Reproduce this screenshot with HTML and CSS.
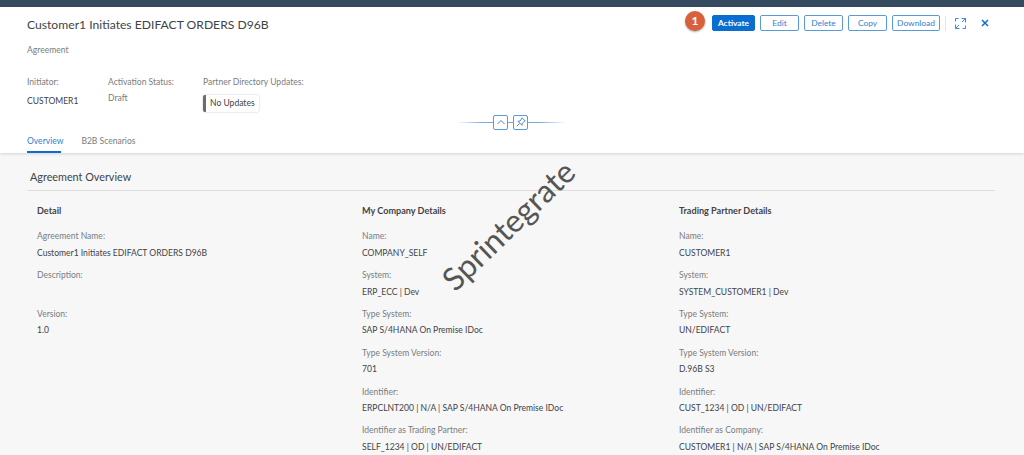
FILE: index.html
```html
<!DOCTYPE html>
<html lang="en">
<head>
<meta charset="utf-8">
<title>Agreement</title>
<link rel="stylesheet" href="styles.css">
</head>
<body>
<div class="shell"></div>
<header class="head">
  <div class="title-row">
    <h1 class="title">Customer1 Initiates EDIFACT ORDERS D96B</h1>
    <div class="actions">
      <span class="step">1</span>
      <button class="btn primary">Activate</button>
      <button class="btn w-edit">Edit</button>
      <button class="btn w-del">Delete</button>
      <button class="btn w-copy">Copy</button>
      <button class="btn w-dl">Download</button>
      <span class="sep"></span>
      <svg class="ico-expand" width="11" height="11" viewBox="0 0 11 11" fill="none" stroke="#3d8bd9" stroke-width="1"><path d="M6.500 .5h4v4M10.500 .5 7 4M4.500 10.500h-4v-4M.5 10.500 4 7M.5 3.500v-3h3M7.500 10.500h3v-3"/></svg>
      <svg class="ico-close" width="8" height="8" viewBox="0 0 8 8" fill="none" stroke="#0a6ed1" stroke-width="1.5"><path d="M1 1l6 6M7 1 1 7"/></svg>
    </div>
  </div>
  <div class="subtitle">Agreement</div>
  <div class="attrs">
    <div class="attr a1"><div class="lab">Initiator:</div><div class="val">CUSTOMER1</div></div>
    <div class="attr a2"><div class="lab">Activation Status:</div><div class="val draft">Draft</div></div>
    <div class="attr a3"><div class="lab">Partner Directory Updates:</div><div class="tag">No Updates</div></div>
  </div>
  <div class="toggles">
    <span class="line left"></span>
    <span class="tbtn"><svg width="10" height="10" viewBox="0 0 10 10" fill="none" stroke="#3d8bd9" stroke-width="1"><path d="M1.500 7l3.500-3.500L8.500 7"/></svg></span>
    <span class="gap"></span>
    <span class="tbtn"><svg width="10" height="10" viewBox="0 0 10 10" fill="none" stroke="#3d8bd9" stroke-width="1"><path d="M6 .8l3.200 3.200-1 .4L6.300 6.300l-.3 2-4-4 2-.3L5.600 1.800zM3.500 6.500.8 9.200"/></svg></span>
    <span class="line right"></span>
  </div>
  <nav class="tabs">
    <span class="tab active">Overview</span>
    <span class="tab">B2B Scenarios</span>
  </nav>
</header>
<main class="content">
  <h2 class="section">Agreement Overview</h2>
  <div class="cols">
    <section class="col c1">
      <h3>Detail</h3>
      <div class="f"><div class="lab">Agreement Name:</div><div class="val">Customer1 Initiates EDIFACT ORDERS D96B</div></div>
      <div class="f"><div class="lab">Description:</div><div class="val">&nbsp;</div></div>
      <div class="f"><div class="lab">Version:</div><div class="val">1.0</div></div>
    </section>
    <section class="col c2">
      <h3>My Company Details</h3>
      <div class="f"><div class="lab">Name:</div><div class="val">COMPANY_SELF</div></div>
      <div class="f"><div class="lab">System:</div><div class="val">ERP_ECC | Dev</div></div>
      <div class="f"><div class="lab">Type System:</div><div class="val">SAP S/4HANA On Premise IDoc</div></div>
      <div class="f"><div class="lab">Type System Version:</div><div class="val">701</div></div>
      <div class="f"><div class="lab">Identifier:</div><div class="val">ERPCLNT200 | N/A | SAP S/4HANA On Premise IDoc</div></div>
      <div class="f"><div class="lab">Identifier as Trading Partner:</div><div class="val">SELF_1234 | OD | UN/EDIFACT</div></div>
    </section>
    <section class="col c3">
      <h3>Trading Partner Details</h3>
      <div class="f"><div class="lab">Name:</div><div class="val">CUSTOMER1</div></div>
      <div class="f"><div class="lab">System:</div><div class="val">SYSTEM_CUSTOMER1 | Dev</div></div>
      <div class="f"><div class="lab">Type System:</div><div class="val">UN/EDIFACT</div></div>
      <div class="f"><div class="lab">Type System Version:</div><div class="val">D.96B S3</div></div>
      <div class="f"><div class="lab">Identifier:</div><div class="val">CUST_1234 | OD | UN/EDIFACT</div></div>
      <div class="f"><div class="lab">Identifier as Company:</div><div class="val">CUSTOMER1 | N/A | SAP S/4HANA On Premise IDoc</div></div>
    </section>
  </div>
</main>
<div class="watermark">Sprintegrate</div>
</body>
</html>
```
FILE: styles.css
```css
* { box-sizing: border-box; }
html, body { margin: 0; height: 455px; overflow: hidden; }
body { font-family: Lato, "Liberation Sans", sans-serif; font-size: 8.55px; color: #414447; background: #f7f7f7; position: relative; }
.shell { height: 7px; background: #354a5f; }
.head { height: 146px; background: #fff; box-shadow: 0 1px 3px rgba(0,0,0,.15); position: relative; padding: 0 0 0 27px; display: flex; flex-direction: column; }
.title-row { display: flex; justify-content: space-between; align-items: flex-start; height: 31px; }
.title { margin: 9px 0 0; font-size: 12.15px; font-weight: 400; line-height: 18px; }
.actions { display: flex; align-items: center; margin-top: 8px; padding-right: 35px; height: 16px; }
.step { width: 20px; height: 20px; border-radius: 50%; background: #d8613c; color: #fff; font-size: 12px; font-weight: 700; display: flex; align-items: center; justify-content: center; box-shadow: 0 1px 2px rgba(0,0,0,.35); margin-right: 7px; margin-top: -5px; }
.btn { font: inherit; font-size: 8.400px; height: 16px; padding: 0; border: 1px solid #5a9ad8; border-radius: 2px; background: #fff; color: #2f7fce; margin-right: 5px; line-height: 14px; }
.primary { background: #0a6ed1; border-color: #0a6ed1; color: #fff; font-weight: 700; width: 43px; }
.w-edit { width: 39px; }
.w-del { width: 39px; }
.w-copy { width: 39px; }
.w-dl { width: 48px; }
.sep { width: 1px; height: 15px; background: #e4e4e4; margin-right: 9px; }
.ico-expand { margin-right: 15px; }
.subtitle { color: #7a7d80; margin-top: 6px; line-height: 12px; }
.attrs { display: flex; margin-top: 20px; }
.lab { color: #7a7d80; line-height: 12px; }
.val { line-height: 12px; }
.attr .val { margin-top: 4px; }
.attr .draft { margin-top: 4px; color: #7a7d80; }
.a1 { width: 81px; }
.a2 { width: 95px; }
.attr.a1 .val { margin-top: 7px; }
.tag { display: inline-block; margin-top: 7px; height: 17px; line-height: 17px; padding: 0 4px; background: #fff; border-left: 3px solid #6a6d70; border-radius: 2px; box-shadow: 0 0 2px rgba(0,0,0,.25); }
.toggles { position: absolute; left: 457px; top: 107px; display: flex; align-items: center; height: 16px; }
.line { width: 36px; height: 1px; }
.line.left { background: linear-gradient(90deg, rgba(10,110,209,0), #7aa8d8 70%); }
.line.right { width: 38px; background: linear-gradient(90deg, #7aa8d8 30%, rgba(10,110,209,0)); }
.gap { width: 5px; height: 1px; background: #7aa8d8; }
.tbtn { width: 15px; height: 15px; border: 1px solid #5a9ad8; border-radius: 2px; display: flex; align-items: center; justify-content: center; background: #fff; }
.tabs { position: absolute; left: 27px; top: 127px; height: 19px; display: flex; gap: 18px; }
.tab { color: #7a7d80; line-height: 14px; }
.active { color: #2f7fce; position: relative; }
.active::after { content: ""; position: absolute; left: 0; right: 2px; top: 17px; height: 2px; background: #0a6ed1; }
.content { padding: 16px 29px 0 28px; }
.section { margin: 0; font-size: 10.8px; font-weight: 400; line-height: 16px; padding: 0 0 5px 2px; border-bottom: 1px solid #dcdcdc; }
.cols { display: flex; padding: 14px 0 0 9px; }
.c1 { width: 325px; }
.c2 { width: 317px; }
.col h3 { margin: 0 0 13.4px; font-size: 9.1px; font-weight: 700; line-height: 12px; }
.f { height: 38.800px; }
.f .val { margin-top: 4.500px; }
.watermark { position: absolute; left: 408px; top: 209px; width: 200px; text-align: center; white-space: nowrap; font-family: Lato, sans-serif; font-size: 31.6px; line-height: 32px; color: #555; transform: rotate(-44deg); }
```
